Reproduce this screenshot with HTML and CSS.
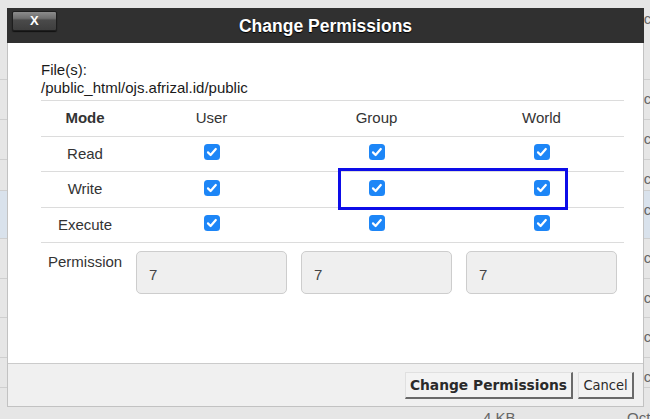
FILE: index.html
```html
<!DOCTYPE html>
<html>
<head>
<meta charset="utf-8">
<link rel="stylesheet" href="styles.css">
</head>
<body>
<div class="page">
  <div class="bg-list">
    <div class="bg-row h80"><span class="date">Oct</span></div>
    <div class="bg-row h40"><span class="date">Oct</span></div>
    <div class="bg-row h40"><span class="date">Oct</span></div>
    <div class="bg-row h31"><span class="date">Oct</span></div>
    <div class="bg-row h48 sel"><span class="date">Oct</span></div>
    <div class="bg-row h40"><span class="date">Oct</span></div>
    <div class="bg-row h39"><span class="date">Oct</span></div>
    <div class="bg-row h40"><span class="date">Oct</span></div>
    <div class="bg-row h30"><span class="date">Oct</span></div>
    <div class="bg-row last"><span class="size">4 KB</span><span class="date2">Oct</span></div>
  </div>

  <div class="dialog">
    <div class="titlebar">
      <button class="close">X</button>
      <span class="title">Change Permissions</span>
    </div>
    <div class="body">
      <div class="files">File(s):<br>/public_html/ojs.afrizal.id/public</div>
      <div class="perm-table">
        <div class="row head">
          <div class="c label mode">Mode</div>
          <div class="c">User</div>
          <div class="c">Group</div>
          <div class="c">World</div>
        </div>
        <div class="row r35">
          <div class="c label">Read</div>
          <div class="c cbc"><svg class="cb" viewBox="0 0 16 16"><rect width="16" height="16" rx="3.5" fill="#1d86f7"/><path d="M4 8.4l2.6 2.6 5.2-6" stroke="#fff" stroke-width="2.2" fill="none" stroke-linecap="round" stroke-linejoin="round"/></svg></div>
          <div class="c cbc"><svg class="cb" viewBox="0 0 16 16"><rect width="16" height="16" rx="3.5" fill="#1d86f7"/><path d="M4 8.4l2.6 2.6 5.2-6" stroke="#fff" stroke-width="2.2" fill="none" stroke-linecap="round" stroke-linejoin="round"/></svg></div>
          <div class="c cbc"><svg class="cb" viewBox="0 0 16 16"><rect width="16" height="16" rx="3.5" fill="#1d86f7"/><path d="M4 8.4l2.6 2.6 5.2-6" stroke="#fff" stroke-width="2.2" fill="none" stroke-linecap="round" stroke-linejoin="round"/></svg></div>
        </div>
        <div class="row r36">
          <div class="c label">Write</div>
          <div class="c cbc"><svg class="cb" viewBox="0 0 16 16"><rect width="16" height="16" rx="3.5" fill="#1d86f7"/><path d="M4 8.4l2.6 2.6 5.2-6" stroke="#fff" stroke-width="2.2" fill="none" stroke-linecap="round" stroke-linejoin="round"/></svg></div>
          <div class="c cbc"><svg class="cb" viewBox="0 0 16 16"><rect width="16" height="16" rx="3.5" fill="#1d86f7"/><path d="M4 8.4l2.6 2.6 5.2-6" stroke="#fff" stroke-width="2.2" fill="none" stroke-linecap="round" stroke-linejoin="round"/></svg></div>
          <div class="c cbc"><svg class="cb" viewBox="0 0 16 16"><rect width="16" height="16" rx="3.5" fill="#1d86f7"/><path d="M4 8.4l2.6 2.6 5.2-6" stroke="#fff" stroke-width="2.2" fill="none" stroke-linecap="round" stroke-linejoin="round"/></svg></div>
        </div>
        <div class="row r35">
          <div class="c label">Execute</div>
          <div class="c cbc"><svg class="cb" viewBox="0 0 16 16"><rect width="16" height="16" rx="3.5" fill="#1d86f7"/><path d="M4 8.4l2.6 2.6 5.2-6" stroke="#fff" stroke-width="2.2" fill="none" stroke-linecap="round" stroke-linejoin="round"/></svg></div>
          <div class="c cbc"><svg class="cb" viewBox="0 0 16 16"><rect width="16" height="16" rx="3.5" fill="#1d86f7"/><path d="M4 8.4l2.6 2.6 5.2-6" stroke="#fff" stroke-width="2.2" fill="none" stroke-linecap="round" stroke-linejoin="round"/></svg></div>
          <div class="c cbc"><svg class="cb" viewBox="0 0 16 16"><rect width="16" height="16" rx="3.5" fill="#1d86f7"/><path d="M4 8.4l2.6 2.6 5.2-6" stroke="#fff" stroke-width="2.2" fill="none" stroke-linecap="round" stroke-linejoin="round"/></svg></div>
        </div>
        <div class="row perm">
          <div class="plabel">Permission</div>
          <div class="pc"><div class="pinput">7</div></div>
          <div class="pc"><div class="pinput">7</div></div>
          <div class="pc"><div class="pinput">7</div></div>
        </div>
      </div>
      <div class="highlight"></div>
    </div>
    <div class="footer">
      <button class="btn primary">Change Permissions</button>
      <button class="btn cancel">Cancel</button>
    </div>
  </div>
</div>
</body>
</html>
```

FILE: styles.css
```css
* { box-sizing: border-box; }
html, body {
  margin: 0;
  padding: 0;
  width: 650px;
  height: 419px;
  overflow: hidden;
  background: #e6e6e6;
  font-family: "Liberation Sans", Arial, sans-serif;
}
.page {
  position: relative;
  width: 650px;
  height: 419px;
}

/* background file list */
.bg-list {
  display: flex;
  flex-direction: column;
}
.bg-row {
  position: relative;
  border-bottom: 1px solid #cfcfcf;
  background: #e6e6e6;
  font-size: 15px;
  color: #666;
}
.bg-row.h80 { height: 80px; }
.bg-row.h40 { height: 40px; }
.bg-row.h39 { height: 39px; }
.bg-row.h31 { height: 31px; }
.bg-row.h30 { height: 30px; }
.bg-row.h48 { height: 48px; }
.bg-row.sel { background: #d9e2ec; }
.bg-row.last { height: 40px; border-bottom: none; }
.bg-row .date {
  position: absolute;
  left: 632px;
  top: 10px;
}
.bg-row .size {
  position: absolute;
  left: 483px;
  top: 21px;
}
.bg-row .date2 {
  position: absolute;
  left: 627px;
  top: 21px;
}

/* dialog */
.dialog {
  position: absolute;
  left: 7px;
  top: 8px;
  width: 637px;
  height: 399px;
  border: 1px solid #c2c2c2;
  border-top: none;
  background: #fff;
  display: flex;
  flex-direction: column;
}
.titlebar {
  position: relative;
  height: 35px;
  margin: 0 -1px;
  background: #303030;
  display: flex;
  align-items: center;
  justify-content: center;
}
.title {
  color: #fff;
  font-weight: bold;
  font-size: 17.5px;
  text-shadow: 0 1px 1px #000;
  margin-top: 2px;
}
.close {
  position: absolute;
  left: 5px;
  top: 3px;
  width: 45px;
  height: 20px;
  padding: 0;
  border: 1px solid #1e1e1e;
  border-radius: 2px;
  background: linear-gradient(#8c8c8c 0%, #6e6e6e 35%, #4a4a4a 45%, #3e3e3e 100%);
  color: #fff;
  font-family: "Liberation Sans", Arial, sans-serif;
  font-weight: bold;
  font-size: 13px;
  line-height: 18px;
  text-align: left;
  padding-left: 17px;
  box-shadow: 0 1px 1px #111;
}

.body {
  position: relative;
  flex: 1;
  padding: 18px 0 0 33px;
}
.files {
  font-size: 15px;
  line-height: 18px;
  color: #1a1a1a;
  margin-bottom: 3px;
}
.perm-table {
  width: 583px;
  font-size: 15px;
  color: #333;
}
.row {
  display: grid;
  grid-template-columns: 88px 165px 165px 165px;
  border-top: 1px solid #dcdcdc;
}
.row.head { height: 36px; }
.row.r35 { height: 35px; }
.row.r36 { height: 36px; }
.c {
  display: flex;
  align-items: center;
  justify-content: center;
  padding-bottom: 2px;
}
.c.cbc { padding-bottom: 4px; }
.mode { font-weight: bold; }
.cb {
  width: 16px;
  height: 16px;
  display: block;
}
.row.perm {
  padding-top: 8px;
  height: 60px;
}
.plabel {
  padding: 2px 0 0 7px;
  line-height: 18px;
}
.pc {
  padding: 0 7px;
}
.pinput {
  height: 43px;
  border: 1px solid #cdcdcd;
  border-radius: 5px;
  background: #efefef;
  display: flex;
  align-items: center;
  padding: 3px 0 0 12px;
  color: #444;
  font-size: 15px;
}
.highlight {
  position: absolute;
  left: 330px;
  top: 125px;
  width: 230px;
  height: 42px;
  border: 3px solid #0d0de8;
}

.footer {
  height: 43px;
  border-top: 1px solid #cbcbcb;
  background: #f0f0f0;
  display: flex;
  justify-content: flex-end;
  align-items: center;
  gap: 5px;
  padding: 1px 9px 0 0;
}
.btn {
  height: 27px;
  background: #f3f3f3;
  border-style: solid;
  border-width: 1px 2px 2px 1px;
  border-color: #e0e0e0 #6a6a6a #6a6a6a #e0e0e0;
  border-radius: 0;
  color: #2a2a2a;
  padding: 0;
  margin: 0;
  white-space: nowrap;
}
.btn.primary {
  font-family: "DejaVu Sans", sans-serif;
  font-weight: bold;
  font-size: 13.8px;
  width: 168px;
}
.btn.cancel {
  font-family: "DejaVu Sans Condensed", "DejaVu Sans", sans-serif;
  font-size: 14.5px;
  width: 56px;
}
```
